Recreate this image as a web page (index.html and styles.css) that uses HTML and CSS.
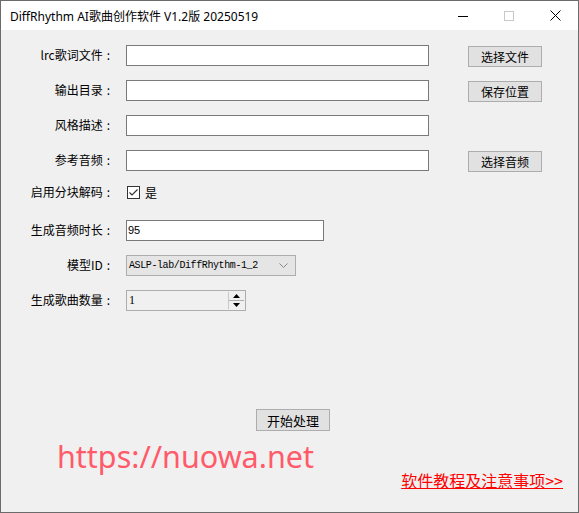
FILE: index.html
```html
<!DOCTYPE html>
<html lang="zh-CN">
<head>
<meta charset="utf-8">
<title>DiffRhythm AI歌曲创作软件</title>
<link rel="stylesheet" href="styles.css">
</head>
<body>
<div class="window">
  <div class="titlebar">
    <span class="title">DiffRhythm AI歌曲创作软件 V1.2版 20250519</span>
    <div class="caption">
      <span class="cap-btn">
        <svg width="10" height="10" viewBox="0 0 10 10"><path d="M0 5.5H10" stroke="#000" stroke-width="1"/></svg>
      </span>
      <span class="cap-btn">
        <svg width="10" height="10" viewBox="0 0 10 10"><rect x="0.5" y="0.5" width="9" height="9" fill="none" stroke="#c8c8c8" stroke-width="1"/></svg>
      </span>
      <span class="cap-btn">
        <svg width="11" height="11" viewBox="0 0 11 11"><path d="M0.5 0.5L10.5 10.5M10.5 0.5L0.5 10.5" stroke="#000" stroke-width="1"/></svg>
      </span>
    </div>
  </div>
  <div class="client">
    <div class="form">
      <div class="row">
        <label class="lbl">lrc歌词文件<span class="colon">:</span></label>
        <div class="input wide"></div>
        <button class="btn side">选择文件</button>
      </div>
      <div class="row">
        <label class="lbl">输出目录<span class="colon">:</span></label>
        <div class="input wide"></div>
        <button class="btn side">保存位置</button>
      </div>
      <div class="row">
        <label class="lbl">风格描述<span class="colon">:</span></label>
        <div class="input wide"></div>
      </div>
      <div class="row">
        <label class="lbl">参考音频<span class="colon">:</span></label>
        <div class="input wide"></div>
        <button class="btn side">选择音频</button>
      </div>
      <div class="row row-check">
        <label class="lbl">启用分块解码<span class="colon">:</span></label>
        <span class="checkbox">
          <svg width="13" height="13" viewBox="0 0 13 13"><rect x="0.5" y="0.5" width="12" height="12" fill="#fff" stroke="#333" stroke-width="1"/><path d="M2.5 6.5L5 9L10.5 3.5" fill="none" stroke="#333" stroke-width="1.2"/></svg>
        </span>
        <span class="check-text">是</span>
      </div>
      <div class="row">
        <label class="lbl">生成音频时长<span class="colon">:</span></label>
        <div class="input medium"><span class="val">95</span></div>
      </div>
      <div class="row">
        <label class="lbl">模型ID<span class="colon">:</span></label>
        <div class="combo">
          <span class="combo-text">ASLP-lab/DiffRhythm-1_2</span>
          <svg class="chev" width="9" height="5" viewBox="0 0 9 5"><path d="M0.5 0.5L4.5 4.5L8.5 0.5" fill="none" stroke="#888" stroke-width="1"/></svg>
        </div>
      </div>
      <div class="row">
        <label class="lbl">生成歌曲数量<span class="colon">:</span></label>
        <div class="spin">
          <span class="spin-text">1</span>
          <span class="spin-btns">
            <span class="spin-up"><svg width="7" height="4" viewBox="0 0 7 4"><path d="M3.5 0L7 4H0Z" fill="#000"/></svg></span>
            <span class="spin-down"><svg width="7" height="4" viewBox="0 0 7 4"><path d="M0 0H7L3.5 4Z" fill="#000"/></svg></span>
          </span>
        </div>
      </div>
    </div>
    <div class="actions">
      <button class="btn start">开始处理</button>
    </div>
    <div class="footer">
      <span class="brand">https://nuowa.net</span>
      <a class="help" href="#">软件教程及注意事项&gt;&gt;</a>
    </div>
  </div>
</div>
</body>
</html>
```
FILE: styles.css
```css
html, body {
  margin: 0;
  padding: 0;
  background: #f0f0f0;
}
.window {
  width: 579px;
  height: 513px;
  box-sizing: border-box;
  border: 1px solid #6b6b6b;
  background: #f0f0f0;
  display: flex;
  flex-direction: column;
  font-family: "Noto Sans CJK SC", sans-serif;
  font-size: 12px;
  color: #000;
}
.titlebar {
  height: 29px;
  background: #fff;
  display: flex;
  align-items: center;
  justify-content: space-between;
  flex: none;
}
.title {
  font-family: "Noto Sans", "Noto Sans CJK SC", sans-serif;
  font-size: 12px;
  margin-left: 9px;
  margin-top: 1px;
}
.caption {
  display: flex;
  align-items: center;
  height: 100%;
}
.cap-btn {
  width: 46px;
  height: 29px;
  display: flex;
  align-items: center;
  justify-content: center;
}
.client {
  flex: 1;
  display: flex;
  flex-direction: column;
}
.form {
  padding-top: 15px;
  display: flex;
  flex-direction: column;
}
.row {
  display: flex;
  align-items: center;
  height: 20px;
  margin-bottom: 15px;
}
.row-check {
  margin-top: -3px;
  margin-bottom: 18px;
}
.lbl {
  width: 109px;
  margin-right: 16px;
  text-align: right;
  font-size: 12px;
  line-height: 20px;
}
.colon {
  margin-left: 4px;
}
.input {
  box-sizing: border-box;
  height: 21px;
  background: #fff;
  border: 1px solid #7a7a7a;
  display: flex;
  align-items: center;
}
.wide { width: 303px; }
.medium { width: 198px; }
.val {
  font-family: "Liberation Sans", sans-serif;
  font-size: 11px;
  padding-left: 1px;
}
.btn {
  box-sizing: border-box;
  width: 74px;
  height: 21px;
  background: #e1e1e1;
  border: 1px solid #adadad;
  font-family: "Noto Sans CJK SC", sans-serif;
  font-size: 12px;
  line-height: 17px;
  padding: 0;
  color: #000;
}
.side {
  margin-left: 39px;
  margin-top: 2px;
}
.checkbox {
  width: 13px;
  height: 13px;
  display: flex;
  margin-left: 1px;
}
.check-text {
  margin-left: 5px;
  font-size: 12px;
}
.combo {
  box-sizing: border-box;
  width: 170px;
  height: 21px;
  background: #e5e5e5;
  border: 1px solid #adadad;
  display: flex;
  align-items: center;
  justify-content: space-between;
  padding: 0 7px 0 2px;
}
.combo-text {
  font-family: "Liberation Mono", monospace;
  font-size: 10px;
  letter-spacing: -0.4px;
}
.chev { display: block; }
.spin {
  box-sizing: border-box;
  width: 120px;
  height: 21px;
  background: #f0f0f0;
  border: 1px solid #adadad;
  display: flex;
  align-items: center;
  justify-content: space-between;
  padding-left: 2px;
}
.spin-text {
  font-family: "Liberation Serif", serif;
  font-size: 12px;
}
.spin-btns {
  display: flex;
  flex-direction: column;
  width: 15px;
  height: 17px;
  margin-right: 1px;
  border-left: 1px solid #c8c8c8;
}
.spin-up, .spin-down {
  flex: 1;
  display: flex;
  align-items: center;
  justify-content: center;
  background: #f0f0f0;
}
.spin-up { border-bottom: 1px solid #adadad; }
.spin-up svg, .spin-down svg { display: block; }
.actions {
  margin-top: 84px;
  padding-left: 255px;
}
.start {
  width: 74px;
  height: 22px;
  font-size: 13px;
}
.footer {
  display: flex;
  justify-content: space-between;
  align-items: flex-end;
  padding: 0 15px 0 56px;
  margin-top: 5px;
}
.brand {
  font-family: "Noto Sans", sans-serif;
  font-size: 30.5px;
  line-height: 40px;
  color: #ff5a6a;
}
.help {
  font-family: "Noto Sans CJK SC", sans-serif;
  font-size: 16px;
  line-height: 20px;
  color: #ff0000;
  text-decoration: underline;
  margin-bottom: -14px;
}
```
